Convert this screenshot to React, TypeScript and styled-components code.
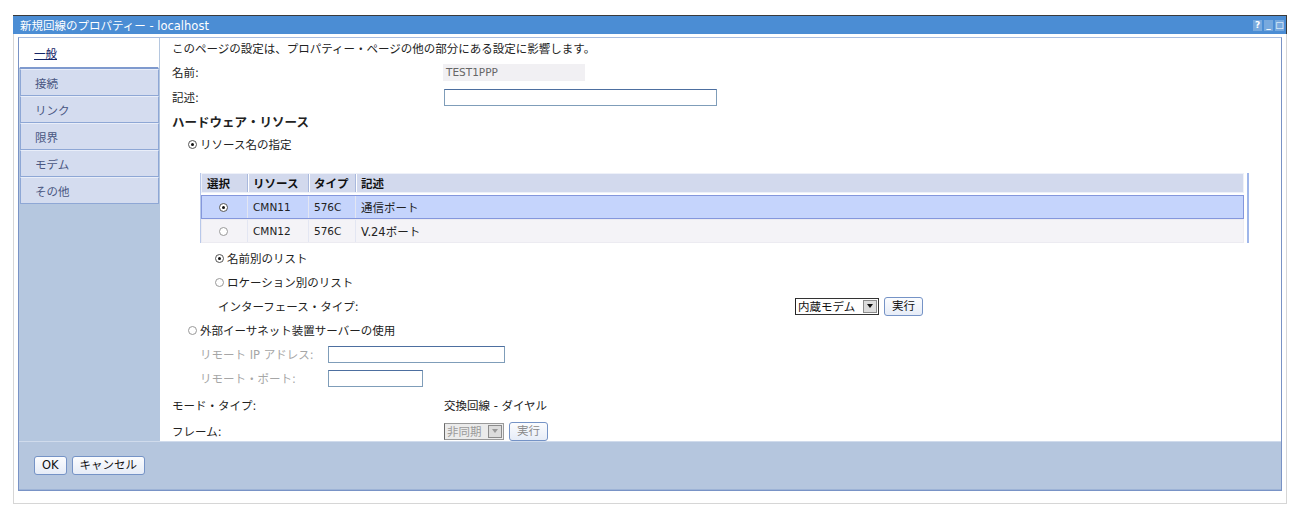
import styled, { createGlobalStyle } from 'styled-components'

const Global = createGlobalStyle`
  html, body {
    margin: 0;
    padding: 0;
    background: #fff;
  }
  body {
    font-family: "DejaVu Sans", "Noto Sans CJK JP", sans-serif;
    font-size: 11.5px;
    color: #222;
  }
`

const Page = styled.div`
  padding: 15px 13px 0 13px;
  width: 1274px;
`

const TitleBar = styled.div`
  height: 18px;
  background: #4b8dd4;
  border-top: 1px solid #3a3a3a;
  border-right: 1px solid #3a3a3a;
  display: flex;
  align-items: center;
  justify-content: space-between;
  padding: 0 2px 0 7px;
  color: #fff;
  font-size: 11.5px;
`

const TitleIcons = styled.div`
  display: flex;
  gap: 2px;
`

const TitleIcon = styled.span`
  width: 9px;
  height: 11px;
  background: #77a9de;
  color: #fff;
  font-size: 9px;
  line-height: 11px;
  text-align: center;
  font-weight: bold;
`

const Frame = styled.div`
  border: 1px solid #d6d6d6;
  border-top: none;
  padding: 3px 4px 12px 4px;
`

const Panel = styled.div`
  border: 1px solid #7993c6;
  border-top-color: #a9bde0;
  display: flex;
  flex-direction: column;
`

const Upper = styled.div`
  display: flex;
  height: 403px;
  overflow: hidden;
`

const TabColumn = styled.div`
  width: 141px;
  background: #b5c7df;
  display: flex;
  flex-direction: column;
  flex-shrink: 0;
`

const Tab = styled.div<{ $active?: boolean }>`
  height: ${p => (p.$active ? 28 : 25)}px;
  display: flex;
  align-items: center;
  padding-left: 14px;
  background: ${p => (p.$active ? '#fff' : '#d4dcef')};
  border: 1px solid ${p => (p.$active ? '#fff' : '#8ea7d5')};
  border-top-color: ${p => (p.$active ? '#fff' : '#e9eef9')};
  border-bottom: ${p => (p.$active ? '2px solid #7f9ace' : '1px solid #8ea7d5')};
  margin: ${p => (p.$active ? '0 1px 0 0' : '0 1px 0 1px')};
  color: ${p => (p.$active ? '#142466' : '#4a5782')};
  text-decoration: ${p => (p.$active ? 'underline' : 'none')};
  box-sizing: content-box;
`

const Content = styled.div`
  flex: 1;
  background: #fff;
  padding-left: 12px;
  display: flex;
  flex-direction: column;
`

const Row = styled.div<{ $h: number; $indent?: number; $mt?: number; $dim?: boolean }>`
  height: ${p => p.$h}px;
  margin-top: ${p => p.$mt ?? 0}px;
  padding-left: ${p => p.$indent ?? 0}px;
  display: flex;
  align-items: center;
  color: ${p => (p.$dim ? '#a6a6a6' : '#222')};
  flex-shrink: 0;
`

const Label = styled.span<{ $w: number }>`
  width: ${p => p.$w}px;
  flex-shrink: 0;
`

const Heading = styled.span`
  font-weight: bold;
  font-size: 12.5px;
`

const ReadOnly = styled.span`
  width: 139px;
  height: 17px;
  padding-left: 3px;
  background: #f1f0f3;
  color: #666;
  display: flex;
  align-items: center;
  font-size: 10.5px;
`

const Input = styled.input<{ $w: number }>`
  width: ${p => p.$w}px;
  height: 17px;
  box-sizing: border-box;
  border: 1px solid #7f9db9;
  border-top-color: #4d6fa0;
  padding: 0 2px;
  margin: 0;
  background: #fff;
`

const Radio = styled.span<{ $checked?: boolean }>`
  width: 7px;
  height: 7px;
  border: 1px solid ${p => (p.$checked ? '#555' : '#999')};
  border-radius: 50%;
  margin-right: 3px;
  display: inline-flex;
  align-items: center;
  justify-content: center;
  background: #fff;
  flex-shrink: 0;
  &::after {
    content: '';
    width: 3px;
    height: 3px;
    border-radius: 50%;
    background: ${p => (p.$checked ? '#111' : 'transparent')};
  }
`

const Table = styled.div`
  margin: 19px 32px 0 28px;
  border-left: 1px solid #b8c8ea;
  border-right: 2px solid #9fb6ea;
  flex-shrink: 0;
`

const TRow = styled.div<{ $kind: 'head' | 'sel' | 'plain' }>`
  display: grid;
  grid-template-columns: 45px 61px 47px 1fr;
  height: ${p => (p.$kind === 'head' ? 18 : 22)}px;
  background: ${p => (p.$kind === 'head' ? '#d2d9ed' : p.$kind === 'sel' ? '#c5d4fc' : '#f4f3f7')};
  border: 1px solid ${p => (p.$kind === 'sel' ? '#8597dc' : p.$kind === 'head' ? '#eef1f9' : '#ecebf1')};
  margin-bottom: ${p => (p.$kind === 'head' ? 2 : 0)}px;
  margin-right: 3px;
  font-weight: ${p => (p.$kind === 'head' ? 'bold' : 'normal')};
  color: ${p => (p.$kind === 'head' ? '#111' : '#222')};
`

const Cell = styled.div<{ $center?: boolean; $head?: boolean }>`
  display: flex;
  align-items: center;
  justify-content: ${p => (p.$center ? 'center' : 'flex-start')};
  padding-left: ${p => (p.$center ? 0 : 5)}px;
  border-left: 1px solid ${p => (p.$head ? '#a9b9dd' : '#e3e6f2')};
  box-shadow: ${p => (p.$head ? 'inset 1px 0 0 #fff' : 'none')};
  &:first-child {
    border-left: none;
    box-shadow: none;
    justify-content: ${p => (p.$head ? 'flex-start' : 'center')};
    padding-left: ${p => (p.$head ? 5 : 0)}px;
  }
`

const Mono = styled.span`
  font-size: 10.5px;
`

const Select = styled.div<{ $disabled?: boolean; $w: number }>`
  width: ${p => p.$w}px;
  height: 17px;
  box-sizing: border-box;
  border: 1px solid ${p => (p.$disabled ? '#9a9a9a' : '#333')};
  border-left-color: ${p => (p.$disabled ? '#6a6a6a' : '#222')};
  display: flex;
  align-items: center;
  justify-content: space-between;
  padding-left: 2px;
  color: ${p => (p.$disabled ? '#9a9a9a' : '#111')};
  background: ${p => (p.$disabled ? '#ebebeb' : '#fff')};
`

const Arrow = styled.span<{ $disabled?: boolean }>`
  width: 14px;
  height: 13px;
  margin-right: 1px;
  background: #dcdcdc;
  border: 1px solid #8c8c8c;
  box-sizing: border-box;
  display: flex;
  align-items: center;
  justify-content: center;
  &::after {
    content: '';
    border-left: 3px solid transparent;
    border-right: 3px solid transparent;
    border-top: 4px solid ${p => (p.$disabled ? '#999' : '#111')};
  }
`

const Button = styled.button<{ $disabled?: boolean }>`
  height: 19px;
  margin: 0 0 0 5px;
  padding: 0 7px;
  font: inherit;
  font-size: 11.5px;
  border: 1px solid #7593c6;
  border-radius: 3px;
  background: linear-gradient(#fbfcfe, #e6ecf7);
  color: ${p => (p.$disabled ? '#8a8a8a' : '#111')};
  line-height: 17px;
  cursor: pointer;
`

const Footer = styled.div`
  height: 47px;
  background: #b5c6de;
  border-top: 1px solid #d0dbec;
  display: flex;
  align-items: center;
  padding-left: 15px;
  border-bottom: 1px solid #9db3d6;
  & > button:first-child {
    margin-left: 0;
  }
`

export default function App() {
  const tabs = ['接続', 'リンク', '限界', 'モデム', 'その他']
  return (
    <Page>
      <Global />
      <TitleBar>
        <span>新規回線のプロパティー - localhost</span>
        <TitleIcons>
          <TitleIcon>?</TitleIcon>
          <TitleIcon>_</TitleIcon>
          <TitleIcon>□</TitleIcon>
        </TitleIcons>
      </TitleBar>
      <Frame>
        <Panel>
          <Upper>
            <TabColumn>
              <Tab $active>一般</Tab>
              {tabs.map(t => (
                <Tab key={t}>{t}</Tab>
              ))}
            </TabColumn>
            <Content>
              <Row $h={20}>このページの設定は、プロパティー・ページの他の部分にある設定に影響します。</Row>
              <Row $h={28}>
                <Label $w={271}>名前:</Label>
                <ReadOnly>TEST1PPP</ReadOnly>
              </Row>
              <Row $h={22}>
                <Label $w={272}>記述:</Label>
                <Input $w={273} />
              </Row>
              <Row $h={26}>
                <Heading>ハードウェア・リソース</Heading>
              </Row>
              <Row $h={20} $indent={16}>
                <Radio $checked />
                リソース名の指定
              </Row>
              <Table>
                <TRow $kind="head">
                  <Cell $head>選択</Cell>
                  <Cell $head>リソース</Cell>
                  <Cell $head>タイプ</Cell>
                  <Cell $head>記述</Cell>
                </TRow>
                <TRow $kind="sel">
                  <Cell><Radio $checked /></Cell>
                  <Cell><Mono>CMN11</Mono></Cell>
                  <Cell><Mono>576C</Mono></Cell>
                  <Cell>通信ポート</Cell>
                </TRow>
                <TRow $kind="plain">
                  <Cell><Radio /></Cell>
                  <Cell><Mono>CMN12</Mono></Cell>
                  <Cell><Mono>576C</Mono></Cell>
                  <Cell>V.24ポート</Cell>
                </TRow>
              </Table>
              <Row $h={24} $mt={3} $indent={43}>
                <Radio $checked />
                名前別のリスト
              </Row>
              <Row $h={24} $indent={43}>
                <Radio />
                ロケーション別のリスト
              </Row>
              <Row $h={24} $indent={46}>
                <Label $w={577}>インターフェース・タイプ:</Label>
                <Select $w={84}>
                  内蔵モデム
                  <Arrow />
                </Select>
                <Button>実行</Button>
              </Row>
              <Row $h={24} $indent={16}>
                <Radio />
                外部イーサネット装置サーバーの使用
              </Row>
              <Row $h={24} $indent={28} $dim>
                <Label $w={128}>リモート IP アドレス:</Label>
                <Input $w={177} />
              </Row>
              <Row $h={24} $indent={28} $dim>
                <Label $w={128}>リモート・ポート:</Label>
                <Input $w={95} />
              </Row>
              <Row $h={26} $mt={2}>
                <Label $w={272}>モード・タイプ:</Label>
                交換回線 - ダイヤル
              </Row>
              <Row $h={26}>
                <Label $w={272}>フレーム:</Label>
                <Select $w={60} $disabled>
                  非同期
                  <Arrow $disabled />
                </Select>
                <Button $disabled>実行</Button>
              </Row>
            </Content>
          </Upper>
          <Footer>
            <Button>OK</Button>
            <Button>キャンセル</Button>
          </Footer>
        </Panel>
      </Frame>
    </Page>
  )
}
